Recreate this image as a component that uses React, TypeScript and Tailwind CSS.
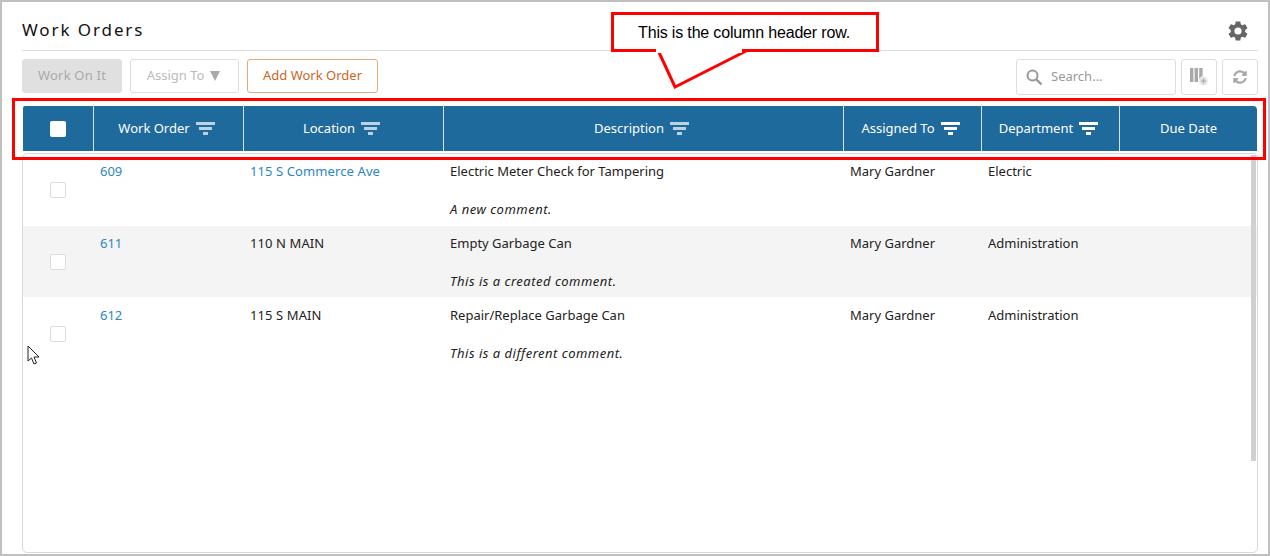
import React from "react";
import { FaSyncAlt } from "react-icons/fa";

const FilterIcon = ({ light }: { light?: boolean }) => (
  <svg width="20" height="13" viewBox="0 0 20 13" className={light ? "opacity-70" : ""}>
    <rect x="0" y="0" width="19" height="3" fill="#fff" />
    <rect x="3" y="5" width="13" height="3" fill="#fff" />
    <rect x="7" y="10" width="5" height="3" fill="#fff" />
  </svg>
);

const Gear = () => (
  <svg width="24" height="24" viewBox="0 0 24 24" fill="#666">
    <path d="M19.14 12.94c.04-.3.06-.61.06-.94s-.02-.64-.07-.94l2.03-1.58a.49.49 0 0 0 .12-.61l-1.92-3.32a.49.49 0 0 0-.59-.22l-2.39.96a7 7 0 0 0-1.62-.94l-.36-2.54a.48.48 0 0 0-.48-.41h-3.84a.48.48 0 0 0-.47.41l-.36 2.54c-.59.24-1.13.57-1.62.94l-2.39-.96a.48.48 0 0 0-.59.22L2.74 8.87a.48.48 0 0 0 .12.61l2.03 1.58c-.05.3-.09.63-.09.94s.02.64.07.94l-2.03 1.58a.49.49 0 0 0-.12.61l1.92 3.32c.12.22.37.29.59.22l2.39-.96c.5.38 1.03.7 1.62.94l.36 2.54c.05.24.24.41.48.41h3.84c.24 0 .44-.17.47-.41l.36-2.54c.59-.24 1.13-.56 1.62-.94l2.39.96c.22.08.47 0 .59-.22l1.92-3.32a.48.48 0 0 0-.12-.61l-2.01-1.58zM12 15.6A3.6 3.6 0 1 1 12 8.4a3.6 3.6 0 0 1 0 7.2z" />
  </svg>
);

const SearchIcon = () => (
  <svg width="17" height="17" viewBox="0 0 17 17" fill="none" stroke="#999" strokeWidth="2">
    <circle cx="6.5" cy="6.5" r="5" />
    <path d="M10.3 10.3L15.5 15.5" strokeWidth="2.4" />
  </svg>
);

const ColumnsAdd = () => (
  <svg width="20" height="20" viewBox="0 0 20 20">
    <rect x="0" y="0" width="3.4" height="14" fill="#a8a8a8" />
    <rect x="4.6" y="0" width="3.4" height="14" fill="#a8a8a8" />
    <rect x="9.2" y="0" width="3.4" height="14" fill="#a8a8a8" />
    <circle cx="13.5" cy="13" r="4.5" fill="#e2e2e2" stroke="#fff" strokeWidth="0.8" />
    <path d="M13.5 10.5v5M11 13h5" stroke="#aaa" strokeWidth="1.2" />
  </svg>
);

const cols = [
  { w: "w-[71px]" },
  { w: "w-[150px]", t: "Work Order", f: true, light: true },
  { w: "w-[200px]", t: "Location", f: true, light: true },
  { w: "w-[400px]", t: "Description", f: true, light: true },
  { w: "w-[138px]", t: "Assigned To", f: true },
  { w: "w-[138px]", t: "Department", f: true },
  { w: "flex-1", t: "Due Date" },
];

const rows = [
  { id: "609", loc: "115 S Commerce Ave", link: true, desc: "Electric Meter Check for Tampering", c: "A new comment.", who: "Mary Gardner", dep: "Electric", bg: "", h: "h-[72px]" },
  { id: "611", loc: "110 N MAIN", desc: "Empty Garbage Can", c: "This is a created comment.", who: "Mary Gardner", dep: "Administration", bg: "bg-[#f4f4f4] mb-[1px]", h: "h-[71px]" },
  { id: "612", loc: "115 S MAIN", desc: "Repair/Replace Garbage Can", c: "This is a different comment.", who: "Mary Gardner", dep: "Administration", bg: "", h: "h-[72px]" },
];

export default function App() {
  return (
    <div className="relative h-[556px] w-[1270px] overflow-hidden border-2 border-[#c0c0c0] bg-white font-['Noto_Sans',sans-serif] text-[13px] text-[#222]">
      <div className="flex h-full flex-col pl-[20px] pr-[10px]">
        <div className="flex h-[49px] w-[1236px] shrink-0 items-end justify-between border-b border-[#ddd] pb-[8px]">
          <span className="text-[17px] leading-[24px] tracking-[1.9px] text-[#111]">Work Orders</span>
          <span className="mr-[8px] -mb-[1px]"><Gear /></span>
        </div>
        <div className="mt-[8px] flex w-[1236px] shrink-0 items-start">
          <button className="h-[34px] w-[100px] rounded-[3px] bg-[#e0e0e0] tracking-[0.2px] text-[#aaa]">Work On It</button>
          <button className="ml-[8px] flex h-[34px] w-[109px] items-center justify-center gap-[6px] rounded-[3px] border border-[#ddd] pr-[2px] text-[#bbb]">
            Assign To
            <svg width="10" height="10" viewBox="0 0 10 10"><path d="M0 0h10L5 10z" fill="#aaa" /></svg>
          </button>
          <button className="ml-[8px] h-[34px] w-[131px] rounded-[3px] border border-[#e8a878] text-[#c8662a]">Add Work Order</button>
          <div className="ml-auto flex h-[36px] w-[160px] items-center rounded-[3px] border border-[#ddd] pl-[9px] text-[#999]">
            <SearchIcon />
            <span className="ml-[8px]">Search...</span>
          </div>
          <div className="ml-[5px] flex h-[36px] w-[36px] items-center justify-center rounded-[3px] border border-[#ddd] pl-[2px] pt-[2px]"><ColumnsAdd /></div>
          <div className="ml-[5px] flex h-[36px] w-[36px] items-center justify-center rounded-[3px] border border-[#ddd]"><FaSyncAlt size={14} color="#aaa" /></div>
        </div>
        <div className="mt-[11px] ml-[1px] flex h-[45px] w-[1234px] shrink-0 rounded-tl-[2px] rounded-tr-[4px] bg-[#1f6a9c] text-white">
          {cols.map((c, i) => (
            <div key={i} className={`${c.w} flex items-center justify-center gap-[6px] ${c.f ? "pr-[3px]" : ""} ${i < 6 ? "border-r border-[#d6e2ea]" : ""}`}>
              {i === 0 && <div className="h-[16px] w-[16px] rounded-[2px] bg-white" />}
              {c.t && <span>{c.t}</span>}
              {c.f && <FilterIcon light={c.light} />}
            </div>
          ))}
        </div>
        <div className="relative mt-[2px] mb-[1px] w-[1236px] flex-1 rounded-[5px] border border-[#d8d8d8]">
          {rows.map((r) => (
            <div key={r.id} className={`${r.h} flex ${r.bg} pr-[8px]`}>
              <div className="flex w-[71px] justify-center pr-[1px] pt-[28px]">
                <div className={`h-[16px] w-[16px] rounded-[2px] border border-[#ddd] ${r.bg ? "bg-white" : ""}`} />
              </div>
              <div className="w-[150px] pl-[6px] pt-[8px] text-[#2b86c5]">{r.id}</div>
              <div className={`w-[200px] pl-[6px] pt-[8px] tracking-[0.1px] ${r.link ? "text-[#2b86c5]" : ""}`}>{r.loc}</div>
              <div className="w-[400px] pl-[6px] pt-[8px]">
                <div>{r.desc}</div>
                <div className="mt-[18px] italic tracking-[0.5px]">{r.c}</div>
              </div>
              <div className="w-[138px] pl-[6px] pt-[8px]">{r.who}</div>
              <div className="w-[138px] pl-[6px] pt-[8px]">{r.dep}</div>
            </div>
          ))}
          <div className="absolute right-[1px] top-[1px] h-[306px] w-[5px] bg-[#d0d0d0]" />
        </div>
      </div>

      {/* annotation overlay */}
      <div className="absolute left-[10px] top-[96px] h-[62px] w-[1254px] border-[3px] border-[#ff0000]" />
      <svg className="absolute left-[640px] top-[42px]" width="120" height="50" viewBox="0 0 120 50">
        <path d="M15 4L33 43L106 6" fill="#fff" stroke="#ff0000" strokeWidth="3" />
      </svg>
      <div className="absolute left-[609px] top-[10px] flex h-[40px] w-[268px] items-center justify-center border-[3px] border-[#ff0000] bg-white pr-[2px] pt-[1px] font-['Liberation_Sans',sans-serif] text-[16px] tracking-[-0.17px] text-black">
        This is the column header row.
      </div>
      <svg className="absolute left-[654px] top-[46px]" width="86" height="5" viewBox="0 0 86 5"><rect width="86" height="5" fill="#fff" /></svg>

      <svg className="absolute left-[25px] top-[343px]" width="14" height="20" viewBox="0 0 14 20">
        <path d="M1 1v15l3.5-3 2.5 6 2.5-1-2.5-6H12z" fill="#fff" stroke="#222" strokeWidth="1" />
      </svg>
    </div>
  );
}
